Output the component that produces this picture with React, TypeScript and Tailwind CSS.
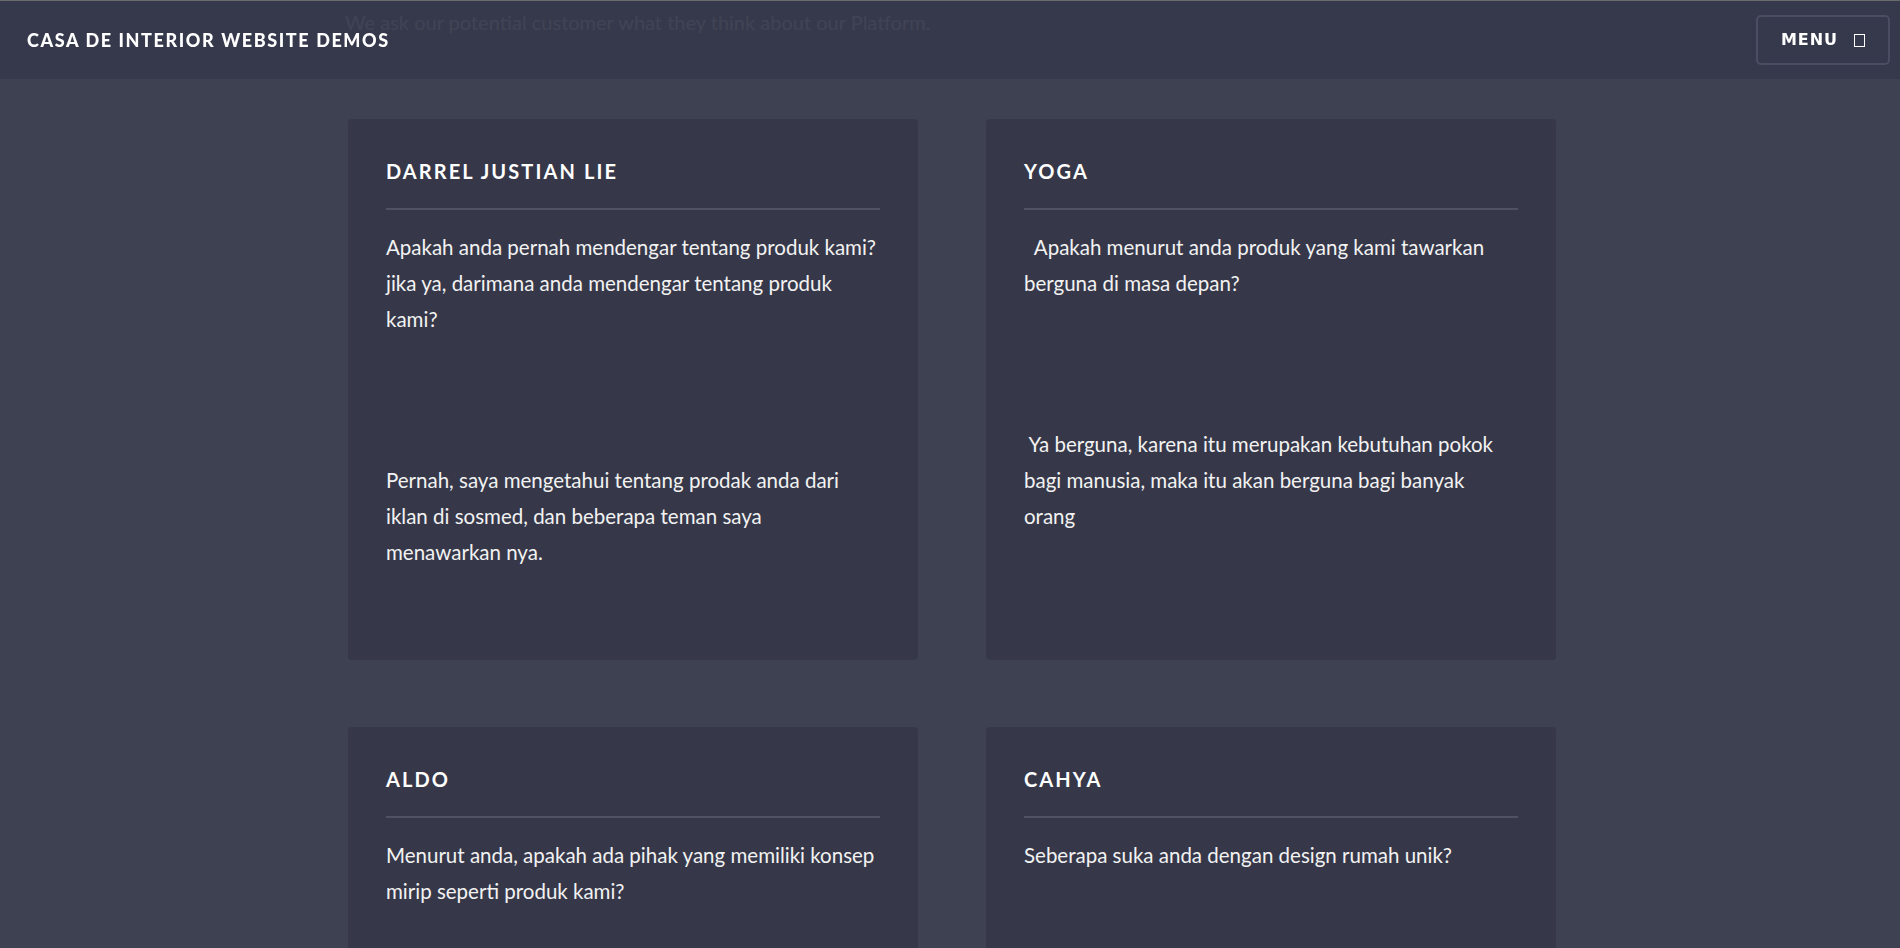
import React from 'react';

type Card = {
  name: string;
  question: string[];
  answer: string[];
};

// survey answers shown in the grid
const cards: Card[] = [
  {
    name: 'DARREL JUSTIAN LIE',
    question: ['Apakah anda pernah mendengar tentang produk kami?', 'jika ya, darimana anda mendengar tentang produk', 'kami?'],
    answer: ['Pernah, saya mengetahui tentang prodak anda dari', 'iklan di sosmed, dan beberapa teman saya', 'menawarkan nya.'],
  },
  {
    name: 'YOGA',
    question: ['\u00a0 Apakah menurut anda produk yang kami tawarkan', 'berguna di masa depan?'],
    answer: ['\u00a0Ya berguna, karena itu merupakan kebutuhan pokok', 'bagi manusia, maka itu akan berguna bagi banyak', 'orang'],
  },
  {
    name: 'ALDO',
    question: ['Menurut anda, apakah ada pihak yang memiliki konsep', 'mirip seperti produk kami?'],
    answer: [],
  },
  {
    name: 'CAHYA',
    question: ['Seberapa suka anda dengan design rumah unik?'],
    answer: [],
  },
];

const Lines: React.FC<{ lines: string[]; className?: string }> = ({ lines, className }) => (
  <p className={className}>
    {lines.map((l, i) => (
      <React.Fragment key={i}>
        {l}
        {i < lines.length - 1 && <br />}
      </React.Fragment>
    ))}
  </p>
);

const SurveyCard: React.FC<{ card: Card }> = ({ card }) => (
  <div className="bg-[#363849] rounded-[4px] px-[38px] pt-[38px] pb-[90px] min-h-[541px]">
    <h3 className="text-white font-bold text-[20px] leading-[28px] tracking-[2.1px]">{card.name}</h3>
    <div className="h-[2px] bg-[#4f5265] mt-[23px]" />
    <Lines lines={card.question} className="mt-[19px] text-[#f2f2f2] text-[20.5px] leading-[36px] whitespace-nowrap" />
    {card.answer.length > 0 && (
      <Lines lines={card.answer} className="mt-[125px] text-[#f2f2f2] text-[20.5px] leading-[36px] whitespace-nowrap" />
    )}
  </div>
);

export default function App() {
  return (
    <div className="min-h-screen bg-[#3e4152] font-['Lato',sans-serif] border-t border-[#6a6a6a]">
      {/* fixed header, slightly see-through */}
      <header className="fixed top-[1px] left-0 right-0 h-[78px] bg-[#35384a]/[0.9] flex items-center justify-between pl-[27px] pr-[10px] z-10">
        <span className="text-white font-black text-[18px] tracking-[1.6px]">CASA DE INTERIOR WEBSITE DEMOS</span>
        <button className="h-[50px] w-[134px] border-2 border-[#4b4e62] rounded-[5px] flex items-center justify-center gap-[16px] text-white font-['DejaVu_Sans',sans-serif] font-bold text-[16px] tracking-[1px]">
          MENU
          <span className="inline-block w-[11px] h-[13px] border border-white" />
        </button>
      </header>

      <main className="w-[1212px] mx-auto pl-[4px] pt-[3px] pb-10">
        <p className="text-[#a3a7b8] text-[20px] leading-[36px] -ml-[3px]">
          We ask our potential customer what they think about our Platform.
        </p>
        <div className="grid grid-cols-2 gap-x-[68px] gap-y-[67px] mt-[79px]">
          {cards.map((c) => (
            <SurveyCard key={c.name} card={c} />
          ))}
        </div>
      </main>
    </div>
  );
}
